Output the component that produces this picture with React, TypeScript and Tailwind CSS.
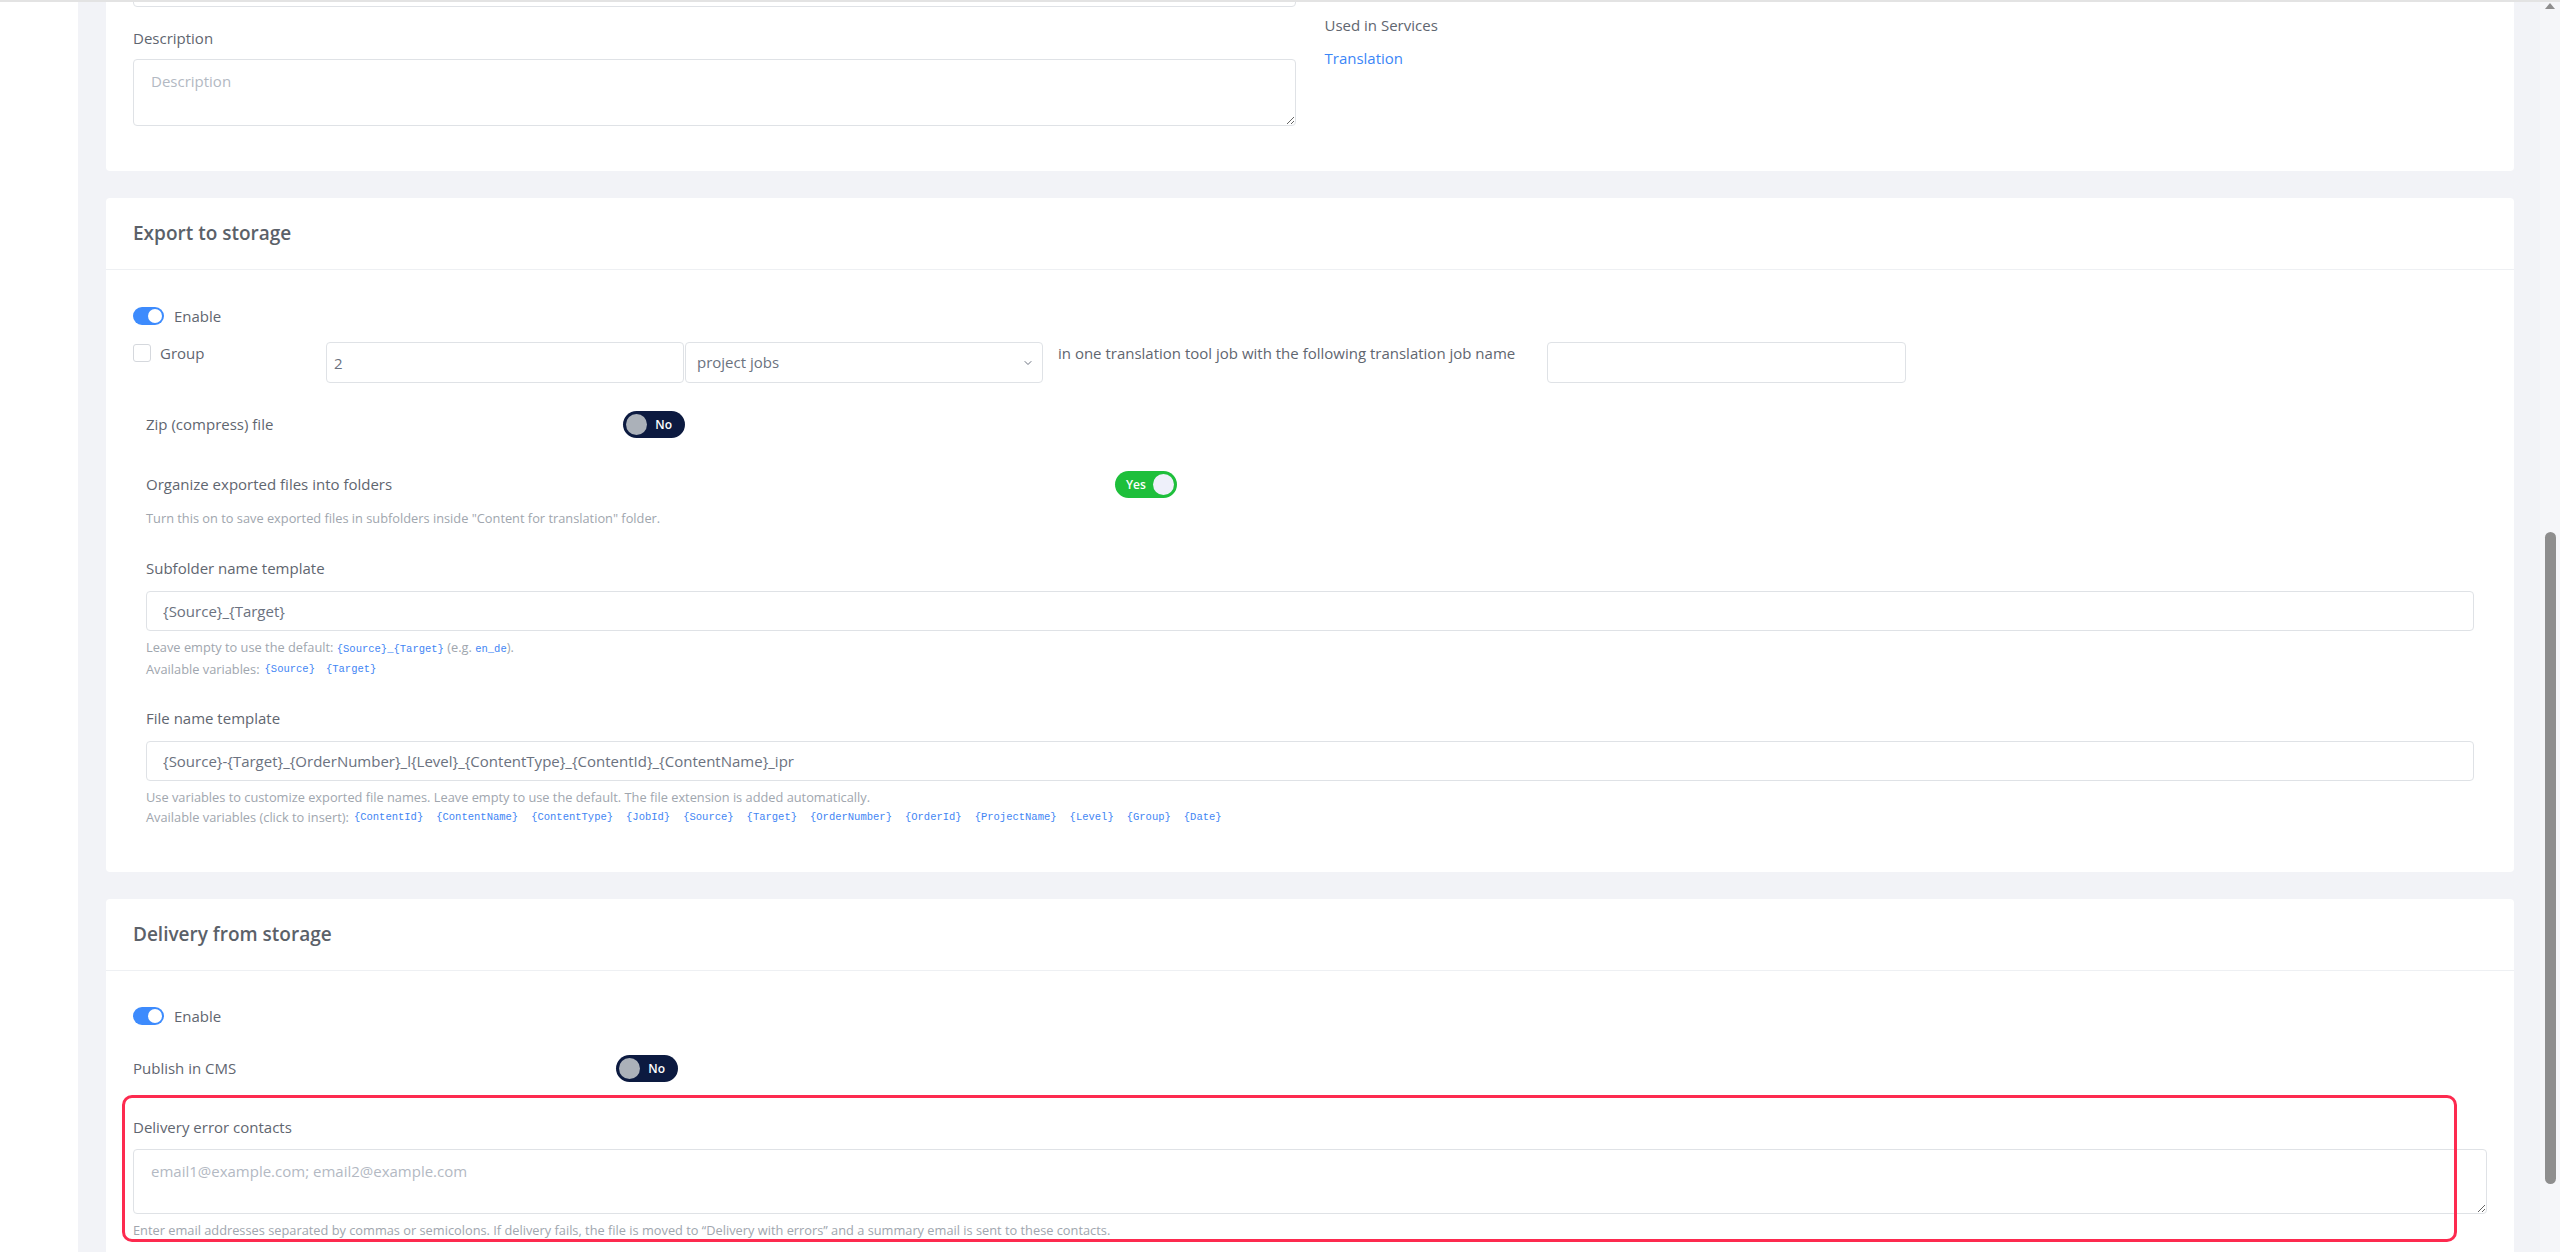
import { ChevronDown } from "lucide-react";

const fileVars = [
  "{ContentId}",
  "{ContentName}",
  "{ContentType}",
  "{JobId}",
  "{Source}",
  "{Target}",
  "{OrderNumber}",
  "{OrderId}",
  "{ProjectName}",
  "{Level}",
  "{Group}",
  "{Date}",
];

function Code({ children }: { children: React.ReactNode }) {
  return (
    <code className="font-['Liberation_Mono',monospace] text-[10.5px] text-[#4285f4]">
      {children}
    </code>
  );
}

function EnableToggle() {
  return (
    <span className="flex h-[18px] w-[31px] shrink-0 items-center justify-end rounded-full bg-[#3d8bfd] px-[2px]">
      <span className="h-[14px] w-[14px] rounded-full bg-white" />
    </span>
  );
}

function YesNo({ on }: { on: boolean }) {
  if (on) {
    return (
      <span className="flex h-[27px] w-[62px] shrink-0 items-center justify-between rounded-full bg-[#1ebf3b] pl-[11px] pr-[3px]">
        <span className="text-[12px] font-semibold text-white">Yes</span>
        <span className="h-[21px] w-[21px] rounded-full bg-[#eef0fa]" />
      </span>
    );
  }
  return (
    <span className="flex h-[27px] w-[62px] shrink-0 items-center justify-between rounded-full bg-[#0c1a40] pl-[3px] pr-[13px]">
      <span className="h-[21px] w-[21px] rounded-full bg-[#abb1b9]" />
      <span className="text-[12px] font-semibold text-white">No</span>
    </span>
  );
}

function CardHeader({ title }: { title: string }) {
  return (
    <div className="flex h-[72px] items-center border-b border-[#eef0f3] px-[27px]">
      <h2 className="text-[19px] font-semibold text-[#5b6169]">{title}</h2>
    </div>
  );
}

export default function App() {
  return (
    <div className="relative flex h-[1252px] w-[2560px] overflow-hidden bg-white font-['Open_Sans',sans-serif] text-[15px] text-[#5f6670]">
      {/* header edge */}
      <div className="absolute inset-x-0 top-0 z-10 h-[2px] bg-[#e3e3e3]" />

      <aside className="w-[78px] shrink-0 bg-white" />

      <main className="flex-1 bg-[#f2f3f7] pl-[28px] pr-[26px]">
        <div className="-mt-[61px] flex flex-col gap-[27px]">
          {/* General */}
          <section className="grid grid-cols-2 gap-x-[29px] rounded-[4px] bg-white px-[27px] pt-[27px] pb-[45px]">
            <div className="flex flex-col">
              <input
                readOnly
                className="h-[41px] rounded-[4px] border border-[#dfe2e6] px-[16px] outline-none"
              />
              <label className="mt-[21px] leading-[20px] font-medium">Description</label>
              <textarea
                readOnly
                placeholder="Description"
                className="mt-[11px] h-[67px] rounded-[4px] border border-[#dfe2e6] px-[17px] pt-[11px] leading-[20px] outline-none placeholder:text-[#b3b9c3]"
              />
            </div>
            <div className="flex flex-col items-start">
              <span className="mt-[49px] leading-[20px] font-medium">Used in Services</span>
              <a className="mt-[13px] leading-[20px] text-[#3b86f7]">Translation</a>
            </div>
          </section>

          {/* Export to storage */}
          <section className="rounded-[4px] bg-white">
            <CardHeader title="Export to storage" />
            <div className="px-[27px] pt-[37px] pb-[45px]">
              <div className="flex h-[18px] items-center gap-[10px]">
                <EnableToggle />
                <span>Enable</span>
              </div>

              <div className="mt-[17px] flex h-[41px] items-start">
                <div className="flex w-[193px] items-start">
                  <span className="mt-[2px] h-[18px] w-[18px] rounded-[3px] border border-[#d5d8dd]" />
                  <span className="ml-[9px] leading-[22px]">Group</span>
                </div>
                <input
                  readOnly
                  defaultValue="2"
                  className="h-[41px] w-[358px] rounded-[4px] border border-[#dfe2e6] px-[7px] text-[#6b7280] outline-none"
                />
                <div className="ml-[1px] flex h-[41px] w-[358px] items-center justify-between rounded-[4px] border border-[#dfe2e6] pl-[11px] pr-[8px] text-[#6b7280]">
                  <span>project jobs</span>
                  <ChevronDown size={12} strokeWidth={2} className="text-[#6b7280]" />
                </div>
                <span className="ml-[15px] w-[489px] whitespace-nowrap leading-[22px]">
                  in one translation tool job with the following translation job name
                </span>
                <input
                  readOnly
                  className="h-[41px] w-[359px] rounded-[4px] border border-[#dfe2e6] px-[12px] outline-none"
                />
              </div>

              <div className="mt-[28px] flex h-[27px] items-center pl-[13px]">
                <span className="w-[477px]">Zip (compress) file</span>
                <YesNo on={false} />
              </div>

              <div className="mt-[33px] flex h-[27px] items-center pl-[13px]">
                <span className="w-[969px] font-medium">Organize exported files into folders</span>
                <YesNo on />
              </div>
              <p className="mt-[12px] pl-[13px] text-[12.8px] leading-[16px] text-[#a0a6ae]">
                Turn this on to save exported files in subfolders inside "Content for translation" folder.
              </p>

              <div className="flex flex-col px-[13px]">
                <label className="mt-[32px] leading-[20px] font-medium">Subfolder name template</label>
                <input
                  readOnly
                  defaultValue="{Source}_{Target}"
                  className="mt-[13px] h-[40px] rounded-[4px] border border-[#dfe2e6] px-[16px] text-[#6b7280] outline-none"
                />
                <div className="mt-[6px] text-[12.8px] leading-[20px] text-[#a0a6ae]">
                  <p>
                    Leave empty to use the default: <Code>{"{Source}_{Target}"}</Code> (e.g. <Code>en_de</Code>).
                  </p>
                  <p className="flex items-center">
                    <span>Available variables:</span>
                    <span className="ml-[5px] flex items-center gap-[11px]">
                      <Code>{"{Source}"}</Code>
                      <Code>{"{Target}"}</Code>
                    </span>
                  </p>
                </div>

                <label className="mt-[29px] leading-[20px] font-medium">File name template</label>
                <input
                  readOnly
                  defaultValue="{Source}-{Target}_{OrderNumber}_l{Level}_{ContentType}_{ContentId}_{ContentName}_ipr"
                  className="mt-[13px] h-[40px] rounded-[4px] border border-[#dfe2e6] px-[16px] text-[#6b7280] outline-none"
                />
                <div className="mt-[6px] text-[12.8px] leading-[20px] text-[#a0a6ae]">
                  <p>
                    Use variables to customize exported file names. Leave empty to use the default. The file extension
                    is added automatically.
                  </p>
                  <p className="flex items-center">
                    <span>Available variables (click to insert):</span>
                    <span className="ml-[5px] flex items-center gap-[13px]">
                      {fileVars.map((v) => (
                        <Code key={v}>{v}</Code>
                      ))}
                    </span>
                  </p>
                </div>
              </div>
            </div>
          </section>

          {/* Delivery from storage */}
          <section className="relative rounded-[4px] bg-white">
            <CardHeader title="Delivery from storage" />
            <div className="flex flex-col px-[27px] pt-[36px] pb-[40px]">
              <div className="flex h-[18px] items-center gap-[10px]">
                <EnableToggle />
                <span>Enable</span>
              </div>

              <div className="mt-[30px] flex h-[27px] items-center">
                <span className="w-[483px]">Publish in CMS</span>
                <YesNo on={false} />
              </div>

              <label className="mt-[35px] leading-[20px] font-medium">Delivery error contacts</label>
              <textarea
                readOnly
                placeholder="email1@example.com; email2@example.com"
                className="mt-[12px] h-[65px] rounded-[4px] border border-[#dfe2e6] px-[17px] pt-[11px] leading-[20px] outline-none placeholder:text-[#b3b9c3]"
              />
              <p className="mt-[8px] text-[12.8px] leading-[16px] text-[#a0a6ae]">
                Enter email addresses separated by commas or semicolons. If delivery fails, the file is moved to
                “Delivery with errors” and a summary email is sent to these contacts.
              </p>
            </div>

            {/* highlight annotation */}
            <div className="pointer-events-none absolute left-[16px] top-[196px] h-[147px] w-[2335px] rounded-[10px] border-[3px] border-[#fd2a4f]" />
          </section>
        </div>
      </main>

      {/* scrollbar */}
      <div className="flex w-[20px] shrink-0 flex-col items-center bg-[#f5f6f9]">
        <span className="mt-[3px] h-0 w-0 border-x-[5px] border-b-[6px] border-x-transparent border-b-[#8e8e8e]" />
        <span className="mt-[523px] h-[652px] w-[11px] rounded-full bg-[#8e8e8e]" />
      </div>
    </div>
  );
}
